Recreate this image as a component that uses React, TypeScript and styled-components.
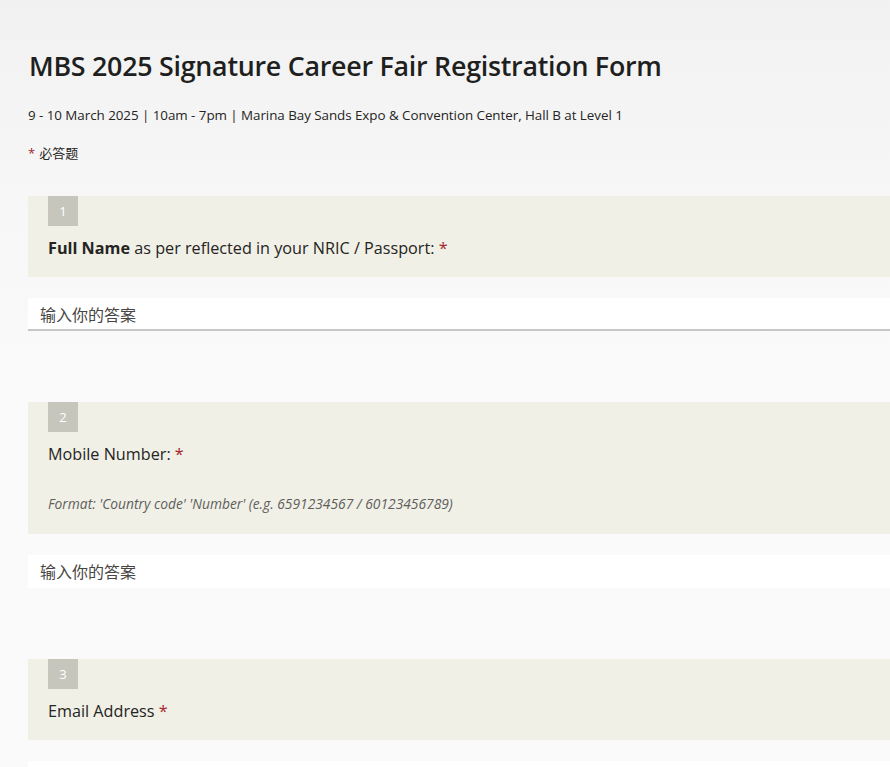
import React from "react";
import styled, { createGlobalStyle } from "styled-components";

const Global = createGlobalStyle`
  html, body { margin: 0; padding: 0; }
  body {
    background: linear-gradient(180deg, #f1f1f1 0px, #f7f7f7 200px, #fafafa 400px, #fafafa 100%);
    font-family: "Open Sans", "Noto Sans", "Noto Sans CJK SC", sans-serif;
    color: #252423;
    overflow: hidden;
    min-height: 767px;
  }
`;

const Page = styled.div`
  padding: 0 0 0 28px;
  width: 920px;
`;

const Header = styled.header`
  padding-top: 46px;
`;

const Title = styled.h1`
  margin: 0 0 0 1px;
  font-size: 26.8px;
  font-weight: 600;
  line-height: 40px;
  letter-spacing: -0.25px;
  color: #201f1e;
`;

const Subtitle = styled.p`
  margin: 19px 0 0 0;
  font-size: 13.4px;
  line-height: 20px;
  color: #252423;
  letter-spacing: -0.05px;
`;

const Required = styled.p`
  margin: 18px 0 0 0;
  font-size: 13px;
  line-height: 20px;
  font-family: "Noto Sans CJK SC", sans-serif;
  color: #252423;
`;

const Star = styled.span`
  color: #a4262c;
  margin-right: 4px;
  font-family: "Open Sans", sans-serif;
`;

const QuestionList = styled.div`
  margin-top: 33px;
  display: flex;
  flex-direction: column;
  gap: 71px;
`;

const Question = styled.section`
  display: flex;
  flex-direction: column;
`;

const QBox = styled.div`
  background: #f0f0e7;
  padding: 0 20px 18px 20px;
`;

const Badge = styled.div`
  width: 30px;
  height: 30px;
  background: #c6c6bd;
  color: #ffffff;
  font-size: 13px;
  display: flex;
  align-items: center;
  justify-content: center;
`;

const QTitle = styled.div`
  margin-top: 11px;
  font-size: 16.2px;
  line-height: 22px;
  color: #252423;
  letter-spacing: 0px;
`;

const Bold = styled.b`
  font-weight: 700;
`;

const Hint = styled.div`
  margin: 30px 0 3px 0;
  font-size: 13.8px;
  line-height: 18px;
  font-style: italic;
  color: #605e5c;
  letter-spacing: 0px;
`;

const Input = styled.div<{ $underline?: boolean }>`
  margin-top: 21px;
  height: 33px;
  box-sizing: border-box;
  background: #ffffff;
  border-bottom: 2px solid ${(p) => (p.$underline ? "#c6c6c6" : "transparent")};
  padding-left: 12px;
  display: flex;
  align-items: center;
  font-family: "Noto Sans CJK SC", sans-serif;
  font-size: 16px;
  color: #484644;
`;

const questions = [
  {
    n: 1,
    title: (
      <>
        <Bold>Full Name</Bold> as per reflected in your NRIC / Passport:
      </>
    ),
    underline: true,
  },
  {
    n: 2,
    title: <>Mobile Number:</>,
    hint: "Format: 'Country code' 'Number' (e.g. 6591234567 / 60123456789)",
  },
  { n: 3, title: <>Email Address</> },
];

export default function App() {
  return (
    <>
      <Global />
      <Page>
        <Header>
          <Title>MBS 2025 Signature Career Fair Registration Form</Title>
          <Subtitle>
            9 - 10 March 2025 | 10am - 7pm | Marina Bay Sands Expo &amp; Convention Center, Hall B at Level 1
          </Subtitle>
          <Required>
            <Star>*</Star>必答题
          </Required>
        </Header>
        <QuestionList>
          {questions.map((q) => (
            <Question key={q.n}>
              <QBox>
                <Badge>{q.n}</Badge>
                <QTitle>
                  {q.title} <Star>*</Star>
                </QTitle>
                {q.hint && <Hint>{q.hint}</Hint>}
              </QBox>
              <Input $underline={q.underline}>输入你的答案</Input>
            </Question>
          ))}
        </QuestionList>
      </Page>
    </>
  );
}
